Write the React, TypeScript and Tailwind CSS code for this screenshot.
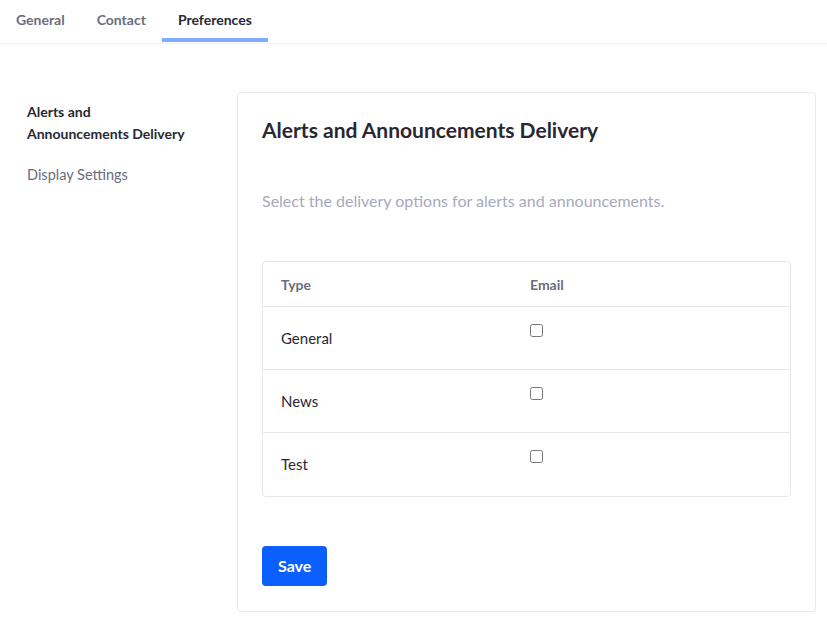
import React, { useState } from 'react';

const tabs = ['General', 'Contact', 'Preferences'];
const rows = ['General', 'News', 'Test'];

export default function App() {
  const [active, setActive] = useState('Preferences');
  const [checked, setChecked] = useState<Record<string, boolean>>({});

  return (
    <div className="min-h-screen bg-white text-[#272833]" style={{ fontFamily: 'Lato, "Noto Sans", sans-serif' }}>
      <nav className="flex h-[44px] border-b border-[#f1f2f5]">
        {tabs.map(t => (
          <button
            key={t}
            onClick={() => setActive(t)}
            className={`relative px-4 pb-[4px] text-[14px] font-bold ${active === t ? 'text-[#272833]' : 'text-[#6b6c7e]'}`}
          >
            {t}
            {active === t && <span className="absolute left-0 right-0 bottom-[1px] h-[4px] bg-[#80acff]" />}
          </button>
        ))}
      </nav>

      <div className="flex pt-[48px] pl-[27px] pr-[11px]">
        <aside className="w-[210px] shrink-0 pt-[9px]">
          <div className="text-[14px] font-bold leading-[22px] text-[#272833]">
            Alerts and
            <br />
            Announcements Delivery
          </div>
          <div className="mt-[19px] text-[14.5px] leading-[22px] text-[#6b6c7e]">Display Settings</div>
        </aside>

        <section className="flex-1 rounded-[4px] border border-[#e7e7ed] px-[24px] pt-[23px] pb-[25px]">
          <h2 className="text-[21px] font-bold leading-[28px]">Alerts and Announcements Delivery</h2>
          <p className="mt-[45px] text-[16px] leading-[24px] text-[#a7a9bc]">
            Select the delivery options for alerts and announcements.
          </p>

          <div className="mt-[48px] rounded-[4px] border border-[#e7e7ed]">
            <div className="flex h-[45px] items-center border-b border-[#e7e7ed] text-[14px] font-bold text-[#6b6c7e]">
              <div className="w-[267px] pl-[18px]">Type</div>
              <div>Email</div>
            </div>
            {rows.map((r, i) => (
              <div key={r} className={`flex h-[63px] ${i < rows.length - 1 ? 'border-b border-[#e7e7ed]' : ''}`}>
                <div className="flex w-[267px] items-center pl-[18px] text-[15px] text-[#272833]">{r}</div>
                <div className="pt-[12px]">
                  <input
                    type="checkbox"
                    checked={!!checked[r]}
                    onChange={e => setChecked({ ...checked, [r]: e.target.checked })}
                    className="h-[13px] w-[13px]"
                  />
                </div>
              </div>
            ))}
          </div>

          <button className="mt-[49px] h-[40px] rounded-[4px] bg-[#0b5fff] px-[16px] text-[16px] font-bold text-white">
            Save
          </button>
        </section>
      </div>
    </div>
  );
}
